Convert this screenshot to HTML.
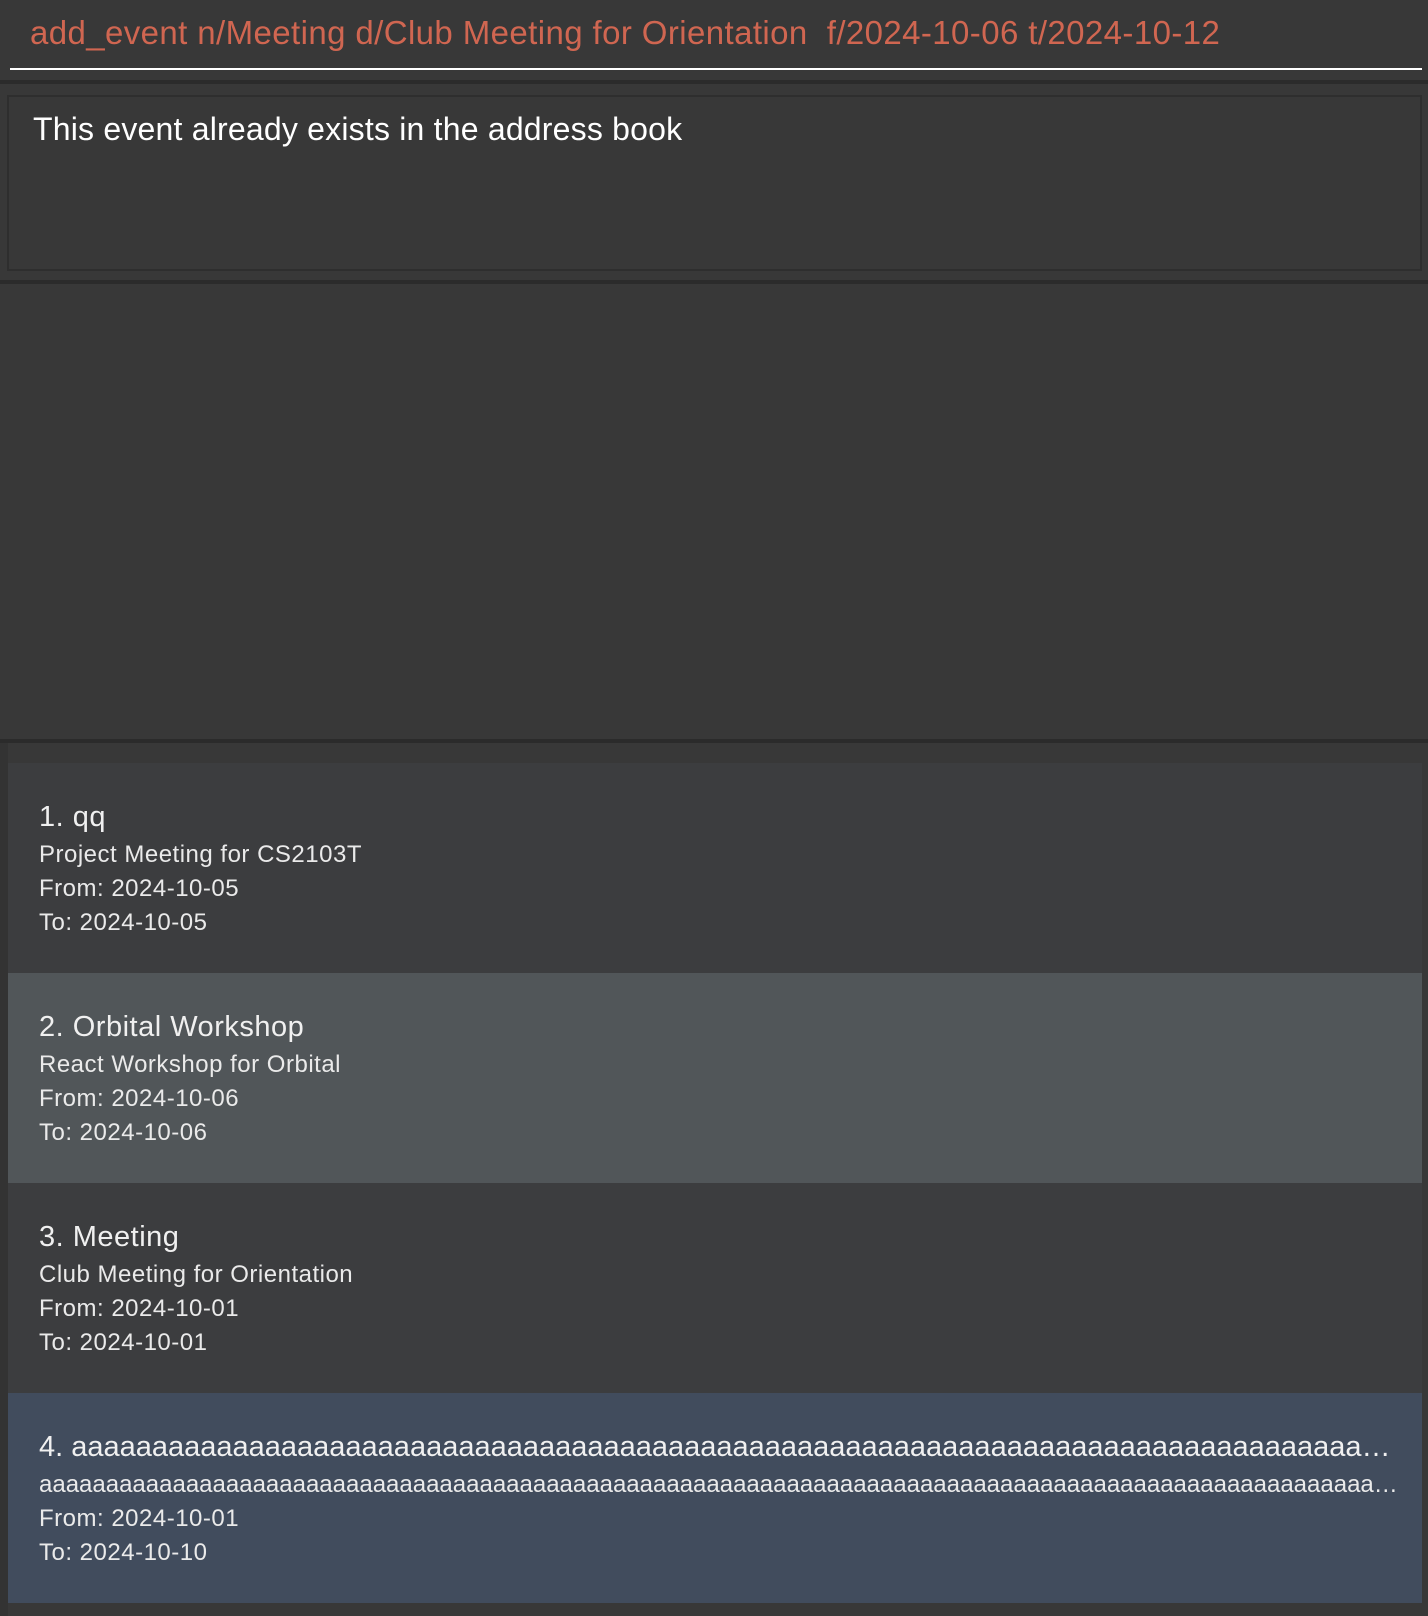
<!DOCTYPE html>
<html><head><style>
body{margin:0;width:1428px;height:1616px;background:#383838;position:relative;overflow:hidden;font-family:"Liberation Sans",sans-serif}
.a{position:absolute;white-space:nowrap}
.sep{position:absolute;left:0;width:1428px;height:4px;background:#2b2b2b}
.card{position:absolute;left:8px;width:1414px;height:210px}
.t{position:absolute;left:31px;font-size:29px;color:#f0f0f0;white-space:nowrap;line-height:1;letter-spacing:0.5px}
.l{position:absolute;left:31px;font-size:24px;color:#eaeaea;white-space:nowrap;line-height:1;letter-spacing:0.5px}
.el{overflow:hidden;text-overflow:ellipsis;width:1360px}
</style></head><body>
<div class="a" style="left:30px;top:14px;font-size:33px;color:#d06651;letter-spacing:0.4px">add_event n/Meeting d/Club Meeting for Orientation&nbsp; f/2024-10-06 t/2024-10-12</div>
<div class="a" style="left:10px;top:68px;width:1412px;height:2px;background:#fff"></div>
<div class="sep" style="top:80px"></div>
<div class="a" style="left:7px;top:95px;width:1411px;height:172px;border:2px solid #2e2e2e"></div>
<div class="a" style="left:33px;top:111px;font-size:32px;color:#fff;letter-spacing:0.2px">This event already exists in the address book</div>
<div class="sep" style="top:280px"></div>
<div class="sep" style="top:739px"></div>
<div class="a" style="left:0;top:743px;width:8px;height:873px;background:#333"></div>

<div class="card" style="top:763px;background:#3c3d3f">
<div class="t" style="top:40px">1. qq</div>
<div class="l" style="top:80px">Project Meeting for CS2103T</div>
<div class="l" style="top:114px">From: 2024-10-05</div>
<div class="l" style="top:148px">To: 2024-10-05</div>
</div>
<div class="card" style="top:973px;background:#515659">
<div class="t" style="top:40px">2. Orbital Workshop</div>
<div class="l" style="top:80px">React Workshop for Orbital</div>
<div class="l" style="top:114px">From: 2024-10-06</div>
<div class="l" style="top:148px">To: 2024-10-06</div>
</div>
<div class="card" style="top:1183px;background:#3c3d3f">
<div class="t" style="top:40px">3. Meeting</div>
<div class="l" style="top:80px">Club Meeting for Orientation</div>
<div class="l" style="top:114px">From: 2024-10-01</div>
<div class="l" style="top:148px">To: 2024-10-01</div>
</div>
<div class="card" style="top:1393px;background:#414c5d">
<div class="t el" style="top:40px;letter-spacing:0">4. aaaaaaaaaaaaaaaaaaaaaaaaaaaaaaaaaaaaaaaaaaaaaaaaaaaaaaaaaaaaaaaaaaaaaaaaaaaaaaaaaaaaaaaaaaaaaaaaaaaa</div>
<div class="l el" style="top:80px;letter-spacing:0">aaaaaaaaaaaaaaaaaaaaaaaaaaaaaaaaaaaaaaaaaaaaaaaaaaaaaaaaaaaaaaaaaaaaaaaaaaaaaaaaaaaaaaaaaaaaaaaaaaaaaaaaaaaaaaaaaaaa</div>
<div class="l" style="top:114px">From: 2024-10-01</div>
<div class="l" style="top:148px">To: 2024-10-10</div>
</div>
</body></html>
